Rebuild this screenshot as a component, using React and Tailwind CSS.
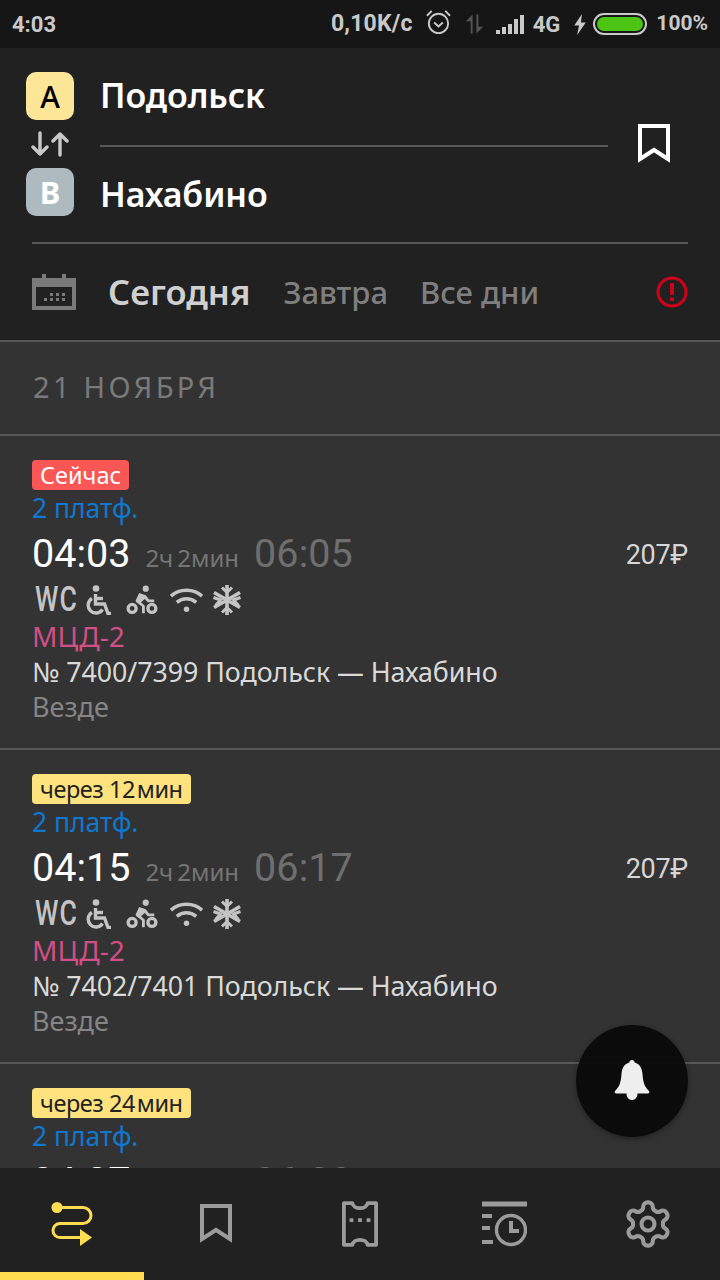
import React from "react";

const sans = "font-['Noto_Sans','Open_Sans',sans-serif]";

function Bookmark({ className }) {
  return (
    <svg viewBox="0 0 32 40" className={className} fill="none" stroke="currentColor" strokeWidth="4" strokeLinecap="butt">
      <path d="M2 2H30V35L16 26L2 35Z" />
    </svg>
  );
}

function TrainCard({ badge, badgeClass, dep, arr, num }) {
  return (
    <div className="h-[314px] shrink-0 border-t-2 border-[#575757] px-8 pt-[24px] relative">
      <div className="flex">
        <span className={`h-[30px] rounded-[4px] px-2 text-[23.5px] leading-[30px] ${badgeClass}`}>{badge}</span>
      </div>
      <div className="text-[26.5px] leading-[34px] mt-[1px] text-[#0f78d1] tracking-[-0.05px]">2 платф.</div>
      <div className="flex items-baseline h-[56px] mt-[1px] font-['Roboto',sans-serif]">
        <span className="text-[39.5px] leading-[56px] text-white font-normal">{dep}</span>
        <span className={`ml-[15px] text-[24px] text-[#757575] ${sans}`}>2ч{"\u2009"}2мин</span>
        <span className="ml-[15px] text-[39.5px] leading-[56px] text-[#6f6f6f] tracking-[0.1px]">{arr}</span>
        <span className="ml-auto text-[27px] text-[#d6d6d6] tracking-[-0.3px] -translate-y-[3px]">207₽</span>
      </div>
      <div className="flex items-center h-[36px] text-[#c4c4c4]">
        <span className="w-[55px] text-[35px] leading-[36px] font-['Roboto',sans-serif] font-medium pl-[4px] scale-x-[0.76] origin-left tracking-[1.500px] whitespace-nowrap">WC</span>
        <svg viewBox="0 0 26 30" className="w-[26px] h-[30px] -ml-[1px]" fill="none" stroke="currentColor" strokeWidth="3.400">
          <circle cx="10" cy="3.500" r="3.300" fill="currentColor" stroke="none" />
          <path d="M9.500 9V19H18.500L22 28.500H25" />
          <path d="M9.500 13.500H17" />
          <path d="M6 13.500A7.800 7.800 0 1 0 16.500 24.500" />
        </svg>
        <svg viewBox="0 0 34 32" className="w-[32px] h-[32px] ml-[14px]" fill="currentColor">
          <circle cx="21" cy="4" r="3.300" />
          <path d="M14 8.500 21 11l3.500 4.500H30v3h-7l-3-3.500-4 3.500 4 3.500V30h-3v-7l-6-4.500c-1-1-1-2.500 0-3.500z" />
          <path fillRule="evenodd" d="M6.500 19a6 6 0 1 0 0 12 6 6 0 0 0 0-12m0 3.500a2.500 2.500 0 1 1 0 5 2.500 2.500 0 0 1 0-5M27.500 19a6 6 0 1 0 0 12 6 6 0 0 0 0-12m0 3.500a2.500 2.500 0 1 1 0 5 2.500 2.500 0 0 1 0-5" />
        </svg>
        <svg viewBox="0 0 36 32" className="w-[35px] h-[32px] ml-[11px]" fill="none" stroke="currentColor" strokeWidth="3.600">
          <path d="M2 12C11 4 25 4 34 12" />
          <path d="M8 18.500C14 13.500 22 13.500 28 18.500" />
          <circle cx="18" cy="25.500" r="2.800" fill="currentColor" stroke="none" />
        </svg>
        <svg viewBox="0 0 32 32" className="w-[32px] h-[32px] ml-[7px]" fill="none" stroke="currentColor" strokeWidth="3.600">
          <path d="M16 1V31M3 8.500 29 23.500M29 8.500 3 23.500" />
          <path d="M11 3.500 16 8.500 21 3.500M11 28.500 16 23.500 21 28.500M2.500 13.500 9.500 16 4.500 21.500M29.500 13.500 22.500 16 27.500 21.500" strokeWidth="3" />
        </svg>
      </div>
      <div className="text-[28px] leading-[36px] text-[#d14f87]">МЦД-2</div>
      <div className="text-[26.800px] leading-[36px] text-[#d9d9d9] tracking-[-0.05px] whitespace-nowrap">№ {num} Подольск — Нахабино</div>
      <div className="text-[27px] leading-[34px] text-[#858585]">Везде</div>
    </div>
  );
}

export default function App() {
  return (
    <div className={`relative w-[720px] h-[1280px] overflow-hidden flex flex-col bg-[#333333] ${sans}`}>
      {/* status bar */}
      <div className="h-[48px] shrink-0 bg-[#161616] flex items-center pl-[12px] pr-[12px] text-[#c9c9c9] font-['Roboto',sans-serif] font-bold text-[22px]">
        <span>4:03</span>
        <span className="ml-auto text-[23px] tracking-[0.2px]">0,10K/c</span>
        <svg viewBox="0 0 28 28" className="w-[27px] h-[27px] ml-[12px] mb-[3px]" fill="none" stroke="currentColor" strokeWidth="2">
          <circle cx="14" cy="15" r="10" />
          <path d="M9.500 14l4.500 4 4.500-4M2 7l5-5M26 7l-5-5" />
        </svg>
        <svg viewBox="0 0 22 24" className="w-[21px] h-[24px] ml-[12px] text-[#555]" fill="currentColor">
          <path d="M7 22V9H2l7-7v20zM13 2v20l7-7h-5V2z" />
        </svg>
        <svg viewBox="0 0 30 20" className="w-[30px] h-[20px] ml-[11px]" fill="currentColor">
          <path d="M0 16h4v4H0zM6 13h4v7H6zM12 10h4v10h-4zM18 5h4v15h-4zM24 1h4v19h-4z" />
        </svg>
        <span className="ml-[7px]">4G</span>
        <svg viewBox="0 0 12 22" className="w-[12px] h-[21px] ml-[14px]" fill="currentColor">
          <path d="M8 0 0 12h5l-2 10 9-13H7z" />
        </svg>
        <div className="ml-[7px] w-[54px] h-[22px] rounded-full border-2 border-[#c9c9c9] p-[2px]">
          <div className="w-full h-full rounded-full bg-[#4cc413]" />
        </div>
        <span className="ml-[9px] text-[21px]">100%</span>
      </div>

      {/* header */}
      <div className="h-[292px] shrink-0 bg-[#212121] flex flex-col">
        <div className="h-[194px] shrink-0 flex pl-[26px] pt-[24px]">
          <div className="w-[48px] flex flex-col items-center shrink-0">
            <div className="w-[48px] h-[48px] rounded-[10px] bg-[#fde698] flex items-center justify-center text-black text-[30px] font-medium">A</div>
            <svg viewBox="0 0 38 26" className="w-[38px] h-[26px] mt-[11px] text-[#c9c9c9]" fill="none" stroke="currentColor" strokeWidth="3.400" strokeLinecap="round" strokeLinejoin="round">
              <path d="M9 2V23M2 16l7 7 7-7" />
              <path d="M29 24V3M22 10l7-7 7 7" />
            </svg>
            <div className="w-[48px] h-[48px] rounded-[10px] bg-[#aeb9c0] flex items-center justify-center text-white text-[31px] font-bold mt-[11px]">B</div>
          </div>
          <div className="w-[508px] ml-[26px] flex flex-col shrink-0">
            <div className="h-[97px] -mt-[24px] pb-[2px] flex items-center text-white text-[34px] font-semibold tracking-[-0.1px]">Подольск</div>
            <div className="h-[2px] bg-[#595959]" />
            <div className="h-[94px] flex items-center text-white text-[34px] font-semibold tracking-[-0.1px]">Нахабино</div>
          </div>
          <div className="w-[92px] flex justify-center pt-[52px]">
            <Bookmark className="w-[32px] h-[40px] text-white" />
          </div>
        </div>
        <div className="h-[2px] bg-[#595959] mx-[32px] shrink-0" />
        <div className="flex-1 flex items-center pl-[32px] pr-[32px] text-[31px] font-medium">
          <svg viewBox="0 0 44 36" className="w-[44px] h-[36px] text-[#7a7a7a]" fill="currentColor">
            <path fillRule="evenodd" d="M10 0h4v4h16V0h4v4h10v32H0V4h10zM4 13v19h36V13z" />
            <path d="M18 23h3v3h-3zM24 23h3v3h-3zM30 23h3v3h-3zM12 28h3v3h-3zM18 28h3v3h-3zM24 28h3v3h-3zM30 28h3v3h-3z" transform="translate(0 -4)" />
          </svg>
          <span className="ml-[32px] text-[#d0d0d0] font-semibold text-[34.500px]">Сегодня</span>
          <span className="ml-[33px] text-[#7f7f7f]">Завтра</span>
          <span className="ml-[32px] text-[#7f7f7f]">Все дни</span>
          <svg viewBox="0 0 32 32" className="w-[32px] h-[32px] ml-auto text-[#d0021b]" fill="none" stroke="currentColor" strokeWidth="3">
            <circle cx="16" cy="16" r="14" />
            <path d="M16 7V19M16 21.500V25" strokeWidth="4" />
          </svg>
        </div>
      </div>

      {/* content */}
      <div className="flex-1 min-h-0 overflow-hidden flex flex-col">
        <div className="h-[94px] shrink-0 border-t-2 border-[#575757] flex items-center pl-[33px] pb-[2px] text-[29px] tracking-[3.300px] text-[#7a7a7a]">
          21 НОЯБРЯ
        </div>
        <TrainCard badge="Сейчас" badgeClass="bg-[#f95656] text-white" dep="04:03" arr="06:05" num="7400/7399" />
        <TrainCard badge={"через 12\u200Aмин"} badgeClass="bg-[#fde27e] text-[#222] tracking-[-0.45px]" dep="04:15" arr="06:17" num="7402/7401" />
        <TrainCard badge={"через 24\u200Aмин"} badgeClass="bg-[#fde27e] text-[#222] tracking-[-0.45px]" dep="04:27" arr="06:29" num="7404/7403" />
      </div>

      {/* bottom nav */}
      <div className="relative h-[112px] shrink-0 bg-[#212121] flex">
        <div className="w-[144px] flex items-center justify-center pb-[1px]">
          <svg viewBox="0 0 44 44" className="w-[44px] h-[44px] text-[#ffdc50]" fill="none" stroke="currentColor" strokeWidth="3">
            <circle cx="7" cy="5.500" r="5.500" fill="currentColor" stroke="none" />
            <path d="M7 5.500H33A8 8 0 0 1 33 21.500H10A7 7 0 0 0 10 35.500H32" />
            <path d="M30 27 42 35.500 30 44Z" fill="currentColor" stroke="none" />
          </svg>
        </div>
        <div className="w-[144px] flex items-center justify-center">
          <Bookmark className="w-[32px] h-[40px] text-[#9b9b9b]" />
        </div>
        <div className="w-[144px] flex items-center justify-center">
          <svg viewBox="0 0 38 48" className="w-[36px] h-[48px] text-[#9b9b9b]" fill="none" stroke="currentColor" strokeWidth="4">
            <path d="M2 2H11C12 9 26 9 27 2H36V46H27C26 39 12 39 11 46H2Z" strokeLinejoin="round" />
            <path d="M8 20h4M17 20h4M26 20h4" strokeWidth="4" />
          </svg>
        </div>
        <div className="w-[144px] flex items-center justify-center">
          <svg viewBox="0 0 46 46" className="w-[46px] h-[46px] text-[#9b9b9b]" fill="none" stroke="currentColor" strokeWidth="3.400">
            <path d="M1 3H46" strokeWidth="5" />
            <path d="M1 15H11M1 27H9M1 41H12" strokeWidth="4" />
            <circle cx="30" cy="29" r="14.500" />
            <path d="M30 20V30H38" strokeWidth="4" />
          </svg>
        </div>
        <div className="w-[144px] flex items-center justify-center">
          <svg viewBox="0 0 24 24" className="w-[52px] h-[52px] text-[#9b9b9b]" fill="none" stroke="currentColor" strokeWidth="1.900" strokeLinejoin="round">
            <path d="M12.220 2h-.44a2 2 0 0 0-2 2v.180a2 2 0 0 1-1 1.730l-.43.250a2 2 0 0 1-2 0l-.150-.080a2 2 0 0 0-2.730.730l-.220.380a2 2 0 0 0 .730 2.730l.150.100a2 2 0 0 1 1 1.720v.510a2 2 0 0 1-1 1.740l-.150.090a2 2 0 0 0-.730 2.730l.220.380a2 2 0 0 0 2.730.730l.150-.080a2 2 0 0 1 2 0l.430.250a2 2 0 0 1 1 1.730V20a2 2 0 0 0 2 2h.440a2 2 0 0 0 2-2v-.180a2 2 0 0 1 1-1.730l.430-.250a2 2 0 0 1 2 0l.150.080a2 2 0 0 0 2.730-.730l.220-.390a2 2 0 0 0-.730-2.730l-.150-.080a2 2 0 0 1-1-1.740v-.500a2 2 0 0 1 1-1.740l.150-.090a2 2 0 0 0 .730-2.730l-.220-.380a2 2 0 0 0-2.730-.730l-.150.080a2 2 0 0 1-2 0l-.430-.250a2 2 0 0 1-1-1.730V4a2 2 0 0 0-2-2z" />
            <circle cx="12" cy="12" r="3" />
          </svg>
        </div>
        <div className="absolute left-0 bottom-0 w-[144px] h-[8px] bg-[#ffdc50]" />
      </div>

      {/* FAB */}
      <div className="absolute left-[576px] top-[1025px] w-[112px] h-[112px] rounded-full bg-[#0a0a0a]/95 shadow-[0_2px_6px_rgba(0,0,0,0.35)] flex items-center justify-center">
        <svg viewBox="0 0 36 40" className="w-[36px] h-[40px] text-[#eeeeee] -mt-[2px]" fill="currentColor">
          <path d="M18 0c1.600 0 2.500 1 2.700 2.500C26 4 28 8.500 28.500 14c.5 7 1.500 12 6 16.500 1.500 1.500 1 3-1 3H23.500C23.500 37.500 21 40 18 40s-5.500-2.500-5.500-6.500H2.500c-2 0-2.500-1.500-1-3C6 26 7 21 7.500 14 8 8.500 10 4 15.300 2.500 15.500 1 16.400 0 18 0z" />
        </svg>
      </div>
    </div>
  );
}
